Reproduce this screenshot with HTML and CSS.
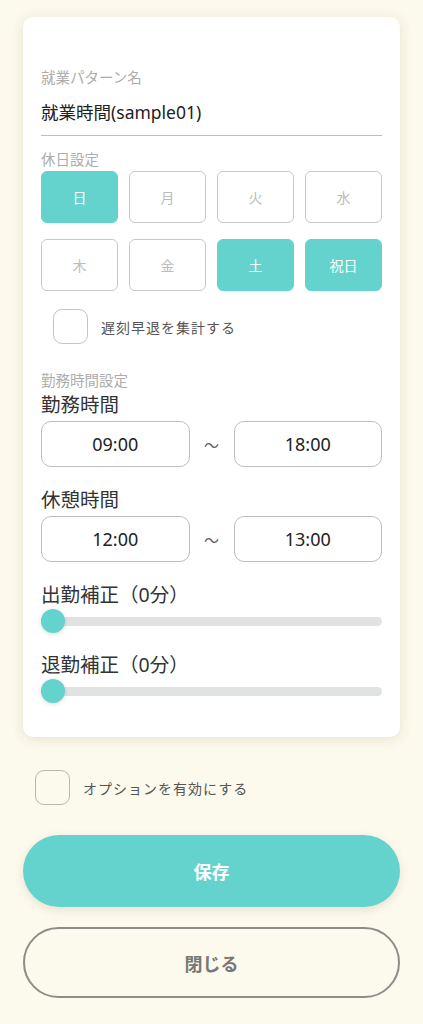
FILE: index.html
```html
<!DOCTYPE html>
<html lang="ja">
<head>
<meta charset="UTF-8">
<title>就業パターン設定</title>
<link rel="stylesheet" href="styles.css">
</head>
<body>

<div class="card">
    <div class="label">就業パターン名</div>
    <div class="name-field">就業時間(sample01)</div>

    <div class="label label-holiday">休日設定</div>
    <div class="days">
        <div class="day active">日</div>
        <div class="day">月</div>
        <div class="day">火</div>
        <div class="day">水</div>
        <div class="day">木</div>
        <div class="day">金</div>
        <div class="day active">土</div>
        <div class="day active">祝日</div>
    </div>

    <label class="check check-late">
        <span class="box"></span>
        <span>遅刻早退を集計する</span>
    </label>

    <div class="label label-work">勤務時間設定</div>

    <div class="title">勤務時間</div>
    <div class="time-row">
        <div class="time">09:00</div>
        <span class="tilde">〜</span>
        <div class="time">18:00</div>
    </div>

    <div class="title title-gap">休憩時間</div>
    <div class="time-row">
        <div class="time">12:00</div>
        <span class="tilde">〜</span>
        <div class="time">13:00</div>
    </div>

    <div class="title title-gap">出勤補正（0分）</div>
    <div class="slider">
        <div class="track"></div>
        <span class="thumb"></span>
    </div>

    <div class="title title-slider">退勤補正（0分）</div>
    <div class="slider">
        <div class="track"></div>
        <span class="thumb"></span>
    </div>
</div>

<label class="check check-option">
    <span class="box"></span>
    <span>オプションを有効にする</span>
</label>

<button class="btn btn-save">保存</button>
<button class="btn btn-close">閉じる</button>

</body>
</html>
```

FILE: styles.css
```css
body {
    font-family: "Noto Sans", "Noto Sans CJK JP", sans-serif;
    margin: 0;
    padding: 17px 23px 0;
    background-color: #fcf9ed;
    color: #333;
}

.card {
    background: white;
    border-radius: 10px;
    padding: 51px 18px 34px;
    box-shadow: 0 2px 12px rgba(160, 150, 100, 0.22);
}

.label {
    font-size: 14.5px;
    line-height: 18px;
    color: #adadad;
}

.label-holiday {
    margin-top: 14px;
}

.label-work {
    margin-top: 27px;
}

.name-field {
    margin-top: 14px;
    font-size: 17.5px;
    line-height: 24px;
    color: #222;
    padding-bottom: 11px;
    border-bottom: 1px solid #bdbdbd;
}

.days {
    margin-top: 3px;
    display: grid;
    grid-template-columns: repeat(4, 1fr);
    column-gap: 11px;
    row-gap: 16px;
}

.day {
    height: 52px;
    box-sizing: border-box;
    border: 1.5px solid #c9c9c9;
    border-radius: 6px;
    display: flex;
    justify-content: center;
    align-items: center;
    font-size: 14px;
    color: #bcbcbc;
}

.day.active {
    background-color: #64d3ce;
    border-color: #64d3ce;
    color: white;
}

.check {
    display: flex;
    align-items: center;
    gap: 13px;
    font-size: 14px;
    color: #555;
    letter-spacing: 1px;
}

.check .box {
    width: 35px;
    height: 35px;
    box-sizing: border-box;
    border: 1.5px solid #c4c4c4;
    border-radius: 9px;
    background: white;
}

.check-late {
    margin: 18px 0 0 12px;
}

.check-option {
    margin: 33px 0 0 12px;
}

.check-option .box {
    border-color: #b8b8b0;
    background: transparent;
}

.title {
    margin-top: 4px;
    font-size: 19.5px;
    line-height: 24px;
    color: #333;
}

.title-gap {
    margin-top: 21px;
}

.title-slider {
    margin-top: 20px;
}

.time-row {
    margin-top: 4px;
    display: flex;
    align-items: center;
}

.time {
    flex: 1;
    height: 46px;
    box-sizing: border-box;
    border: 1px solid #bdbdbd;
    border-radius: 10px;
    display: flex;
    justify-content: center;
    align-items: center;
    font-size: 18px;
    color: #222;
}

.tilde {
    width: 44px;
    text-align: center;
    font-size: 15px;
    color: #666;
}

.slider {
    position: relative;
    margin-top: 2px;
    height: 24px;
    display: flex;
    align-items: center;
}

.track {
    width: 100%;
    height: 9px;
    border-radius: 5px;
    background-color: #e1e3e3;
}

.thumb {
    position: absolute;
    left: 0;
    top: 0;
    width: 24px;
    height: 24px;
    border-radius: 50%;
    background-color: #64d3ce;
    box-shadow: 0 1px 4px rgba(0, 0, 0, 0.15);
}

.btn {
    display: block;
    width: 100%;
    border-radius: 36px;
    font-family: "Noto Sans", "Noto Sans CJK JP", sans-serif;
    font-size: 18px;
    font-weight: bold;
    cursor: pointer;
}

.btn-save {
    margin-top: 30px;
    height: 72px;
    border: none;
    background-color: #64d3ce;
    color: white;
    box-shadow: 0 3px 8px rgba(150, 140, 100, 0.2);
}

.btn-close {
    margin-top: 20px;
    height: 71px;
    border: 2px solid #8d8d88;
    background: transparent;
    color: #777;
}
```
